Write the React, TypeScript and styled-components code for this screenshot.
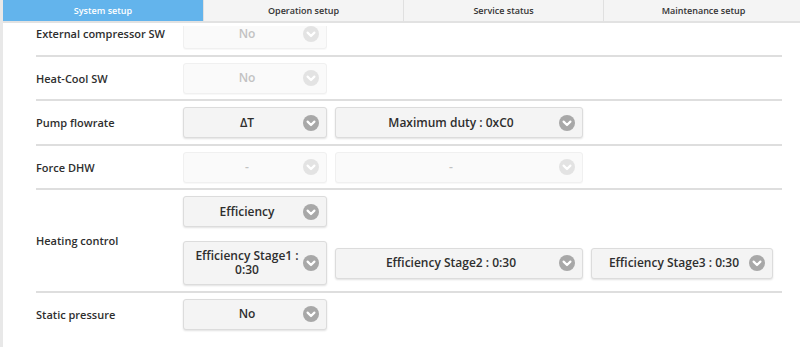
import React from "react";
import styled, { createGlobalStyle } from "styled-components";

const Global = createGlobalStyle`
  html, body { margin: 0; padding: 0; background: #fff; overflow: hidden; }
  body { font-family: "Open Sans", "Noto Sans", sans-serif; color: #333; }
  * { box-sizing: border-box; }
`;

const Page = styled.div`
  display: flex;
  width: 800px;
  height: 347px;
  overflow: hidden;
`;

const Stripe = styled.div`
  width: 3px;
  flex: 0 0 3px;
  background: #e8e8e8;
`;

const Main = styled.div`
  flex: 1;
  min-width: 0;
  display: flex;
  flex-direction: column;
`;

const TabBar = styled.div`
  display: flex;
  height: 23px;
  flex: 0 0 23px;
  background: #f4f4f4;
  border-bottom: 2px solid #e2e2e2;
  overflow: hidden;
`;

const Tab = styled.div<{ $active?: boolean }>`
  flex: 0 0 200px;
  width: 200px;
  display: flex;
  align-items: center;
  justify-content: center;
  font-size: 9px;
  font-weight: 600;
  color: ${(p) => (p.$active ? "#fff" : "#333")};
  background: ${(p) => (p.$active ? "#63b4ec" : "#f4f4f4")};
  border-left: ${(p) => (p.$active ? "none" : "1px solid #e0e0e0")};
`;

const Content = styled.div`
  flex: 1;
  margin-top: 3px;
  overflow: hidden;
`;

const List = styled.div`
  margin: -14px 18px 0 33px;
`;

const Row = styled.div`
  display: flex;
  align-items: center;
  padding: 6px 0 5.5px;
  border-bottom: 2px solid #dedede;

  &:last-child {
    border-bottom: none;
  }
`;

const Label = styled.div`
  flex: 0 0 147px;
  font-size: 11px;
  font-weight: 600;
  color: #2e2e2e;
`;

const Controls = styled.div`
  display: flex;
  flex-direction: column;
  gap: 14px;
`;

const ControlLine = styled.div`
  display: flex;
  align-items: center;
  gap: 8px;
`;

const Select = styled.div<{ $w: number; $disabled?: boolean; $tall?: boolean }>`
  width: ${(p) => p.$w}px;
  height: ${(p) => (p.$tall ? "44px" : "31px")};
  display: flex;
  align-items: center;
  padding: 0 7px 0 8px;
  border-radius: 3px;
  background: ${(p) => (p.$disabled ? "#fafafa" : "#f4f4f4")};
  border: 1px solid ${(p) => (p.$disabled ? "#f0f0f0" : "#dcdcdc")};
  box-shadow: ${(p) => (p.$disabled ? "0 1px 1px rgba(0,0,0,0.03)" : "0 1px 2px rgba(0,0,0,0.12)")};
`;

const SelectText = styled.div<{ $disabled?: boolean }>`
  flex: 1;
  text-align: center;
  font-size: 12px;
  line-height: 14px;
  font-weight: 600;
  color: ${(p) => (p.$disabled ? "#c2c2c2" : "#2e2e2e")};
  padding-right: 1px;
`;

const IconWrap = styled.span`
  flex: 0 0 16px;
  width: 16px;
  height: 16px;
  display: flex;
`;

const Chevron = ({ disabled }: { disabled?: boolean }) => (
  <IconWrap>
    <svg width="16" height="16" viewBox="0 0 16 16">
      <circle cx="8" cy="8" r="8" fill={disabled ? "#e3e3e3" : "#a8a8a8"} />
      <path
        d="M4.6 6.6 L8 10 L11.4 6.6"
        fill="none"
        stroke="#fff"
        strokeWidth="2.2"
        strokeLinecap="round"
        strokeLinejoin="round"
      />
    </svg>
  </IconWrap>
);

type Sel = { text: string; w: number; disabled?: boolean; tall?: boolean };

const SelectBox = ({ text, w, disabled, tall }: Sel) => (
  <Select $w={w} $disabled={disabled} $tall={tall}>
    <SelectText $disabled={disabled}>{text}</SelectText>
    <Chevron disabled={disabled} />
  </Select>
);

const rows: { label: string; lines: Sel[][] }[] = [
  { label: "External compressor SW", lines: [[{ text: "No", w: 144, disabled: true }]] },
  { label: "Heat-Cool SW", lines: [[{ text: "No", w: 144, disabled: true }]] },
  {
    label: "Pump flowrate",
    lines: [[{ text: "ΔT", w: 144 }, { text: "Maximum duty : 0xC0", w: 248 }]],
  },
  {
    label: "Force DHW",
    lines: [[{ text: "-", w: 144, disabled: true }, { text: "-", w: 248, disabled: true }]],
  },
  {
    label: "Heating control",
    lines: [
      [{ text: "Efficiency", w: 144 }],
      [
        { text: "Efficiency Stage1 : 0:30", w: 144, tall: true },
        { text: "Efficiency Stage2 : 0:30", w: 248 },
        { text: "Efficiency Stage3 : 0:30", w: 182 },
      ],
    ],
  },
  { label: "Static pressure", lines: [[{ text: "No", w: 144 }]] },
];

export default function App() {
  return (
    <>
      <Global />
      <Page>
        <Stripe />
        <Main>
          <TabBar>
            <Tab $active>System setup</Tab>
            <Tab>Operation setup</Tab>
            <Tab>Service status</Tab>
            <Tab>Maintenance setup</Tab>
          </TabBar>
          <Content>
            <List>
              {rows.map((r) => (
                <Row key={r.label}>
                  <Label>{r.label}</Label>
                  <Controls>
                    {r.lines.map((line, i) => (
                      <ControlLine key={i}>
                        {line.map((s, j) => (
                          <SelectBox key={j} {...s} />
                        ))}
                      </ControlLine>
                    ))}
                  </Controls>
                </Row>
              ))}
            </List>
          </Content>
        </Main>
      </Page>
    </>
  );
}
